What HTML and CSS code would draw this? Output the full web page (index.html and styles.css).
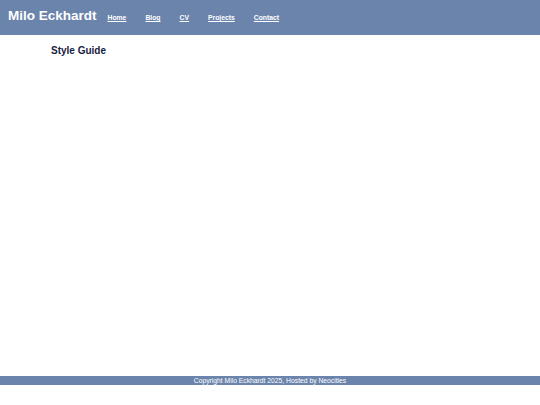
FILE: index.html
```html
<!DOCTYPE html>
<html lang="en">
<head>
<meta charset="utf-8">
<title>Style Guide - Milo Eckhardt</title>
<link rel="stylesheet" href="styles.css">
</head>
<body>
<header class="site-header">
  <h1 class="site-title">Milo Eckhardt</h1>
  <nav class="site-nav">
    <a href="#">Home</a>
    <a href="#">Blog</a>
    <a href="#">CV</a>
    <a href="#">Projects</a>
    <a href="#">Contact</a>
  </nav>
</header>
<main class="content">
  <h2 class="page-title">Style Guide</h2>
</main>
<footer class="site-footer">Copyright Milo Eckhardt 2025, Hosted by Neocities</footer>
</body>
</html>
```
FILE: styles.css
```css
html, body {
  margin: 0;
  padding: 0;
}
body {
  font-family: "Liberation Sans", Arial, sans-serif;
  background: #ffffff;
  min-height: 405px;
  display: flex;
  flex-direction: column;
  box-sizing: border-box;
  padding-bottom: 20px;
}
.site-header {
  background: #6b84ab;
  height: 35px;
  display: flex;
  align-items: center;
  padding-left: 8px;
  box-sizing: border-box;
}
.site-title {
  margin: 0;
  color: #ffffff;
  font-size: 13.5px;
  font-weight: bold;
  line-height: 1;
  position: relative;
  top: -2px;
}
.site-nav {
  display: flex;
  gap: 19px;
  margin-left: 11px;
  padding-top: 2px;
}
.site-nav a {
  color: #ffffff;
  font-size: 6.8px;
  font-weight: bold;
  text-decoration: underline;
  line-height: 1;
}
.content {
  flex: 1;
  padding: 10px 0 0 51px;
}
.page-title {
  margin: 0;
  font-size: 10px;
  font-weight: bold;
  color: #18213f;
  line-height: 12px;
}
.site-footer {
  background: #6b84ab;
  color: #ffffff;
  font-size: 6.75px;
  height: 9px;
  line-height: 9px;
  text-align: center;
}
```
